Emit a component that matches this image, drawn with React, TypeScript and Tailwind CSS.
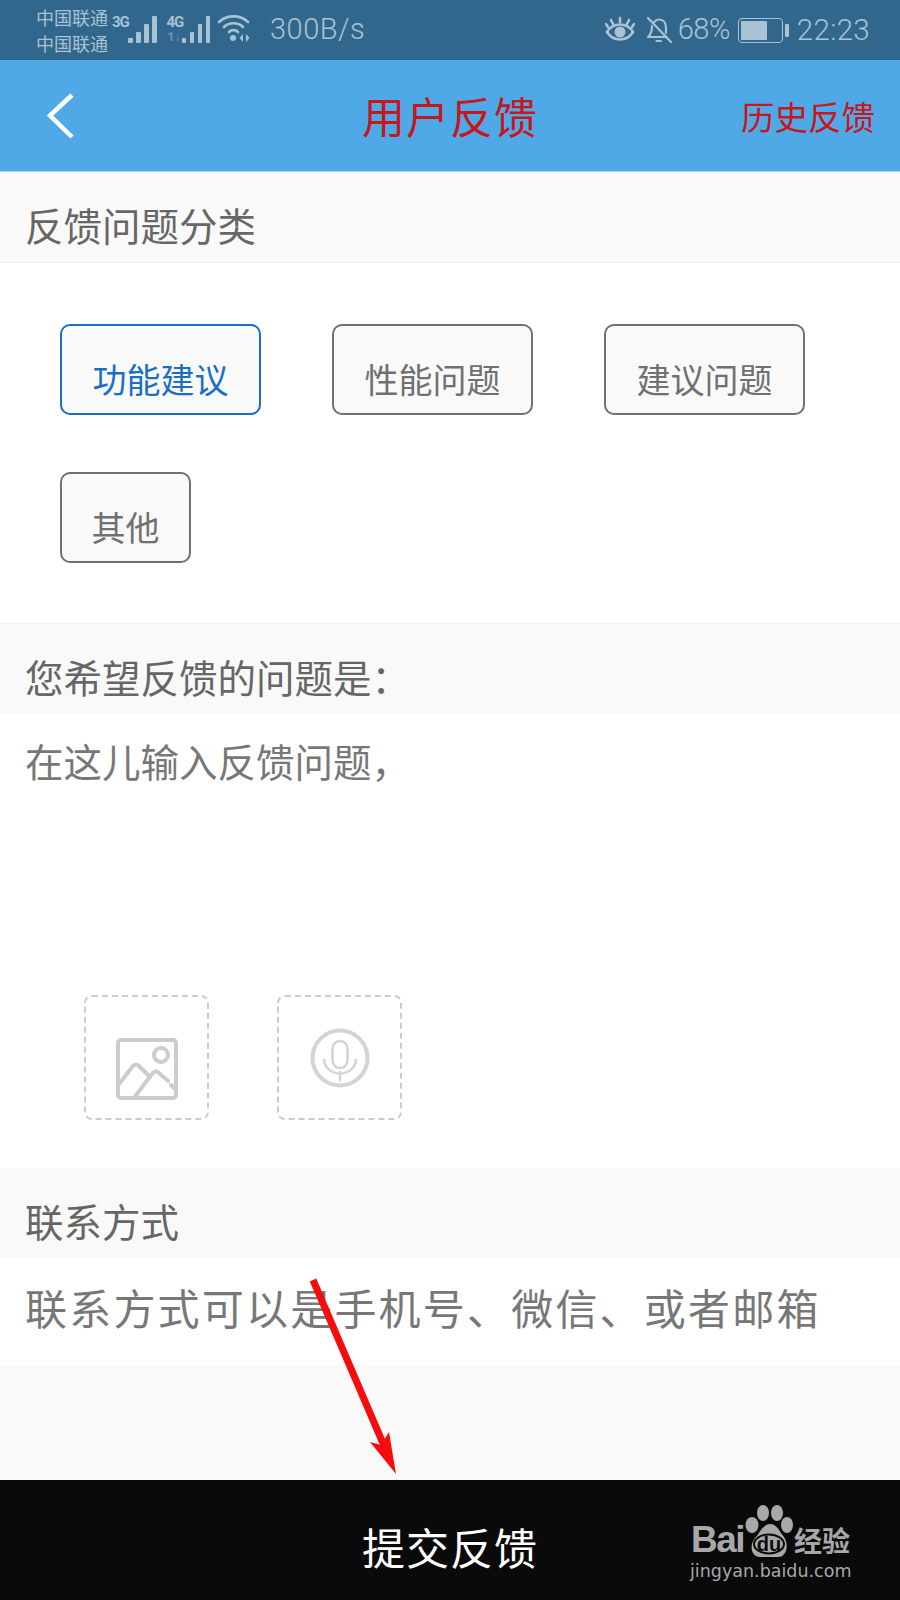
const cjk = "font-['Noto_Sans_CJK_SC','Liberation_Sans',sans-serif]";

function Bars() {
  const heights = [5, 11, 19, 27];
  return (
    <div className="flex items-end gap-[3.500px] h-[27px]">
      {heights.map((h) => (
        <div key={h} className="w-[4.500px] rounded-[1px] bg-[#a9c2d4]" style={{ height: h }} />
      ))}
    </div>
  );
}

function StatusBar() {
  return (
    <div className="h-[60px] bg-[#31678c] flex items-center text-[#a9c2d4] pl-[36px] pr-[30px] font-['Roboto',sans-serif]">
      <div className={`${cjk} text-[18px] leading-[26px] w-[76px] shrink-0`}>
        <div>中国联通</div>
        <div>中国联通</div>
      </div>
      <div className="flex items-end h-[34px] mt-[-8px]">
        <span className="text-[15px] font-bold leading-none self-start mt-[6px] w-[16px] tracking-[-1px]">3G</span>
        <Bars />
      </div>
      <div className="relative flex items-end h-[34px] ml-[10px] mt-[-8px]">
        <span className="text-[15px] font-bold leading-none self-start mt-[6px] w-[15px] tracking-[-1px]">4G</span>
        <span className="absolute left-[1px] bottom-[0px] text-[12px] font-bold leading-none text-[#6f97b3]">1↓</span>
        <Bars />
      </div>
      <svg width="34" height="28" viewBox="0 0 34 28" className="ml-[7px] mt-[-4px] shrink-0" fill="none" stroke="#a9c2d4" strokeWidth="2.600" strokeLinecap="round">
        <path d="M2 8C10 0.500 23 0.500 31 8" />
        <path d="M7 13C12 8 21 8 26 13" />
        <path d="M12 18C14.500 15.500 18.500 15.500 21 18" />
        <circle cx="16" cy="24" r="3" fill="#a9c2d4" stroke="none" />
        <path d="M26 20l-3.500 4 3.500 4zM29 20l3.500 4-3.500 4z" fill="#a9c2d4" stroke="none" />
      </svg>
      <span className="ml-[19px] text-[29px] tracking-[0.500px] font-light">300B/s</span>
      <div className="flex-1" />
      <svg width="30" height="28" viewBox="0 0 30 28" className="shrink-0" fill="none" stroke="#a9c2d4" strokeWidth="2.600" strokeLinecap="round">
        <path d="M2 16C8 6 22 6 28 16C22 26 8 26 2 16Z" />
        <circle cx="15" cy="16" r="5.500" fill="#a9c2d4" stroke="none" />
        <path d="M15 6V2M8 8L6 4M22 8l2-4M3 11L1 8M27 11l2-3" />
      </svg>
      <svg width="26" height="28" viewBox="0 0 26 28" className="ml-[11px] shrink-0" fill="none" stroke="#a9c2d4" strokeWidth="2.200" strokeLinecap="round" strokeLinejoin="round">
        <path d="M2 2L25 26" />
        <path d="M8 6C10 4 12 3.500 13 3.500C18 3.500 20 8 20 12V17" />
        <path d="M6 10C6 15 5.500 18 2 21H20" />
        <path d="M10.500 25H15" />
      </svg>
      <span className="ml-[6px] text-[29px] font-light tracking-[-0.500px]">68%</span>
      <div className="ml-[8px] flex items-center">
        <div className="w-[45px] h-[25px] border-[1.500px] border-[#a9c2d4] rounded-[4px] p-[2px]">
          <div className="h-full w-[66%] bg-[#a9c2d4] rounded-[1px]" />
        </div>
        <div className="w-[4px] h-[13px] ml-[2px] bg-[#a9c2d4] rounded-[1px]" />
      </div>
      <span className="ml-[8px] text-[29.500px] font-light tracking-[0.300px]">22:23</span>
    </div>
  );
}

function Header() {
  return (
    <div className={`${cjk} relative h-[112px] bg-[#4fa9e6] flex items-center justify-center border-b border-[#a8d8ee]`}>
      <svg width="30" height="48" viewBox="0 0 30 48" className="absolute left-[46px] top-[32px]" fill="none" stroke="#ffffff" strokeWidth="4.500">
        <path d="M26 3L4 23.500L26 45" />
      </svg>
      <span className="text-[#c8161d] text-[43px] leading-none tracking-[1px]">用户反馈</span>
      <span className="absolute right-[25px] top-[34px] text-[#c8161d] text-[33.500px] leading-[44px]">历史反馈</span>
    </div>
  );
}

function SectionLabel({ children }: { children: React.ReactNode }) {
  return (
    <div className="h-[90px] bg-[#f9f9f9] flex items-center pl-[25px] text-[38.500px] leading-none text-[#666666] pt-[14px]">
      {children}
    </div>
  );
}

function Tag({ label, active, width }: { label: string; active?: boolean; width: string }) {
  return (
    <div
      className={`${width} h-[91px] rounded-[10px] border-2 bg-[#f9f9f9] flex items-center justify-center pt-[18px] text-[34px] leading-none ${
        active ? "border-[#1a6fc4] text-[#1a6fc4]" : "border-[#707070] text-[#707070]"
      }`}
    >
      {label}
    </div>
  );
}

function UploadBox({ children }: { children: React.ReactNode }) {
  return (
    <div className="w-[125px] h-[125px] rounded-[8px] border-2 border-dashed border-[#cccccc] flex items-center justify-center">
      {children}
    </div>
  );
}

function BaiduMark() {
  return (
    <div className="absolute left-[691px] top-[1505px] w-[170px] text-[#a8a8a8]">
      <div className="relative flex items-end h-[52px]">
        <span className="font-['Liberation_Sans',sans-serif] font-bold text-[37px] leading-[34px] w-[54px] tracking-[-1.500px]">Bai</span>
        <svg width="48" height="52" viewBox="0 0 48 52" className="shrink-0" fill="#a8a8a8">
          <ellipse cx="7" cy="20" rx="6.500" ry="8" />
          <ellipse cx="18" cy="8" rx="6" ry="8" />
          <ellipse cx="32" cy="8" rx="6" ry="8" />
          <ellipse cx="42" cy="20" rx="6" ry="8" />
          <path d="M25 19C32 19 34 26 39 32C44 39 42 52 33 52H15C6 52 4 40 10 33C15 28 18 19 25 19Z" />
          <ellipse cx="24" cy="39" rx="15" ry="9.500" stroke="#0a0a0a" strokeWidth="2" />
        </svg>
        <span className={`${cjk} text-[28px] leading-[34px] ml-[1px] font-bold whitespace-nowrap`}>经验</span>
        <span className="absolute left-[54px] top-[29px] w-[48px] text-center font-['Liberation_Sans',sans-serif] font-bold text-[20px] leading-none text-[#0a0a0a]">du</span>
      </div>
      <div className="font-['DejaVu_Sans',sans-serif] text-[17.500px] leading-[22px] mt-[3px] ml-[-1px] whitespace-nowrap">jingyan.baidu.com</div>
    </div>
  );
}

export default function App() {
  return (
    <div className={`${cjk} relative w-[900px] h-[1600px] overflow-hidden bg-[#f9f9f9]`}>
      <StatusBar />
      <Header />
      <SectionLabel>反馈问题分类</SectionLabel>
      <div className="h-[362px] bg-white border-t border-[#f1f1f1] border-b pl-[60px] pt-[61px]">
        <div className="flex flex-wrap gap-x-[71px] gap-y-[57px] w-[760px]">
          <Tag label="功能建议" active width="w-[201px]" />
          <Tag label="性能问题" width="w-[201px]" />
          <Tag label="建议问题" width="w-[201px]" />
          <Tag label="其他" width="w-[131px]" />
        </div>
      </div>
      <SectionLabel>您希望反馈的问题是：</SectionLabel>
      <div className="h-[454px] bg-white flex flex-col">
        <div className="pl-[25px] pt-[24px] text-[38.500px] leading-[44px] text-[#777777]">在这儿输入反馈问题，</div>
        <div className="flex gap-[68px] pl-[84px] mt-[213px]">
          <UploadBox>
            <svg width="62" height="62" viewBox="0 0 62 62" className="mt-[22px]" fill="none" stroke="#cccccc" strokeWidth="4" strokeLinejoin="round" strokeLinecap="round">
              <rect x="2" y="2" width="58" height="58" rx="3" />
              <circle cx="45" cy="17" r="7" />
              <path d="M3 46L17 28C19 26 21 26 23 28L33 38" />
              <path d="M18 60L36 36C38 33 41 33 43 35L52 43" />
              <path d="M55 47L58 50" />
            </svg>
          </UploadBox>
          <UploadBox>
            <svg width="60" height="60" viewBox="0 0 60 60" fill="none" stroke="#d4d4d4" strokeLinecap="round">
              <circle cx="30" cy="30" r="27.500" strokeWidth="4" />
              <rect x="22.500" y="13" width="15" height="27" rx="7.500" strokeWidth="2.500" />
              <path d="M14 32C16 50 44 50 46 32" strokeWidth="2.500" />
              <path d="M30 44V52" strokeWidth="2.500" />
            </svg>
          </UploadBox>
        </div>
      </div>
      <SectionLabel>联系方式</SectionLabel>
      <div className="h-[107px] bg-white flex items-center pl-[25px] pb-[10px] text-[42px] tracking-[2.200px] leading-none text-[#777777] whitespace-nowrap">
        联系方式可以是手机号、微信、或者邮箱
      </div>
      <div className="h-[115px] bg-[#f9f9f9]" />
      <div className="h-[120px] bg-[#0a0a0a] flex items-center justify-center pt-[12px] text-white text-[43px] leading-none tracking-[1px]">
        提交反馈
      </div>

      <svg width="900" height="1600" viewBox="0 0 900 1600" className="absolute inset-0 pointer-events-none">
        <path d="M313 1280L385 1448" stroke="#f50d0d" strokeWidth="7" />
        <path d="M396 1474L370 1442L381 1445L389 1432Z" fill="#f50d0d" />
      </svg>
      <BaiduMark />
    </div>
  );
}
